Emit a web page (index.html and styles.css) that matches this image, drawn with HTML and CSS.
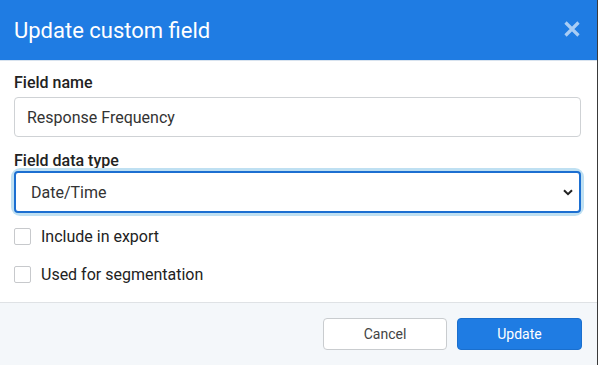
FILE: index.html
```html
<!DOCTYPE html>
<html>
<head>
<meta charset="utf-8">
<link rel="stylesheet" href="styles.css">
</head>
<body>
<div class="modal">
  <div class="modal-header">
    <h1 class="modal-title">Update custom field</h1>
    <button class="close-btn" aria-label="Close">
      <svg width="18" height="18" viewBox="0 0 18 18"><path d="M2.5 2.5 L15.5 15.5 M15.5 2.5 L2.5 15.5" stroke="currentColor" stroke-width="3.2" stroke-linecap="butt"/></svg>
    </button>
  </div>
  <div class="modal-body">
    <label class="field-label">Field name</label>
    <input class="text-input" type="text" value="Response Frequency">
    <label class="field-label second">Field data type</label>
    <div class="select-wrap">
      <div class="select">
        <span>Date/Time</span>
        <svg class="chev" width="10" height="7" viewBox="0 0 10 7"><path d="M1 1.2 L5 5.2 L9 1.2" fill="none" stroke="#222" stroke-width="2"/></svg>
      </div>
    </div>
    <label class="check-row"><span class="box"></span><span>Include in export</span></label>
    <label class="check-row"><span class="box"></span><span>Used for segmentation</span></label>
  </div>
  <div class="modal-footer">
    <button class="btn btn-cancel">Cancel</button>
    <button class="btn btn-primary">Update</button>
  </div>
</div>
</body>
</html>
```
FILE: styles.css
```css
* { box-sizing: border-box; }
html, body { margin: 0; padding: 0; }
body {
  background: #3a3a3a;
  font-family: Roboto, "Noto Sans", sans-serif;
  width: 598px;
  height: 365px;
  overflow: hidden;
}
.modal {
  width: 597px;
  height: 365px;
  background: #fff;
  display: flex;
  flex-direction: column;
}
.modal-header {
  height: 61px;
  background: #1f7ce3;
  display: flex;
  align-items: center;
  justify-content: space-between;
  padding: 0 14px 0 14px;
  border-bottom: 1px solid #d8e3ef;
}
.modal-title {
  margin: 0;
  color: #fff;
  font-size: 22px;
  font-weight: 400;
  padding-top: 1px;
}
.close-btn {
  background: none;
  border: 0;
  padding: 0;
  margin-right: 2px;
  color: #a9cdf5;
  display: flex;
  margin-top: -2px;
}
.modal-body {
  padding: 13px 16px 0 14px;
  flex: 1;
  display: flex;
  flex-direction: column;
}
.field-label {
  font-size: 16px;
  font-weight: 500;
  color: #222;
  line-height: 18px;
  margin-bottom: 5px;
}
.field-label.second { margin-top: 15px; margin-bottom: 1px; }
.text-input {
  height: 40px;
  border: 1px solid #cfd2d5;
  border-radius: 4px;
  padding: 0 12px;
  font-family: inherit;
  font-size: 16px;
  color: #333;
  outline: none;
  width: 100%;
}
.select-wrap {
  border-radius: 6px;
  box-shadow: 0 0 0 3px #bfe0f2;
}
.select {
  height: 42px;
  border: 2px solid #1c6fd1;
  border-radius: 4px;
  display: flex;
  align-items: center;
  justify-content: space-between;
  padding: 0 6px 0 15px;
  font-size: 16px;
  color: #333;
}
.chev { margin-top: 1px; }
.check-row {
  display: flex;
  align-items: center;
  gap: 10px;
  font-size: 16px;
  color: #222;
  margin-top: 15px;
  height: 17px;
}
.check-row + .check-row { margin-top: 21px; }
.box {
  width: 17px;
  height: 17px;
  border: 1px solid #c7c9cc;
  border-radius: 2px;
  background: #fff;
}
.modal-footer {
  height: 63px;
  background: #f4f7fa;
  border-top: 1px solid #dfe2e5;
  display: flex;
  justify-content: flex-end;
  align-items: center;
  gap: 10px;
  padding: 0 15px 0 0;
}
.btn {
  height: 32px;
  width: 125px;
  border-radius: 4px;
  font-family: inherit;
  font-size: 14px;
}
.btn-cancel {
  background: #fff;
  border: 1px solid #c9cccf;
  color: #444;
  width: 124px;
}
.btn-primary {
  background: #1f7ce3;
  border: 1px solid #1a6fce;
  color: #fff;
}
```
